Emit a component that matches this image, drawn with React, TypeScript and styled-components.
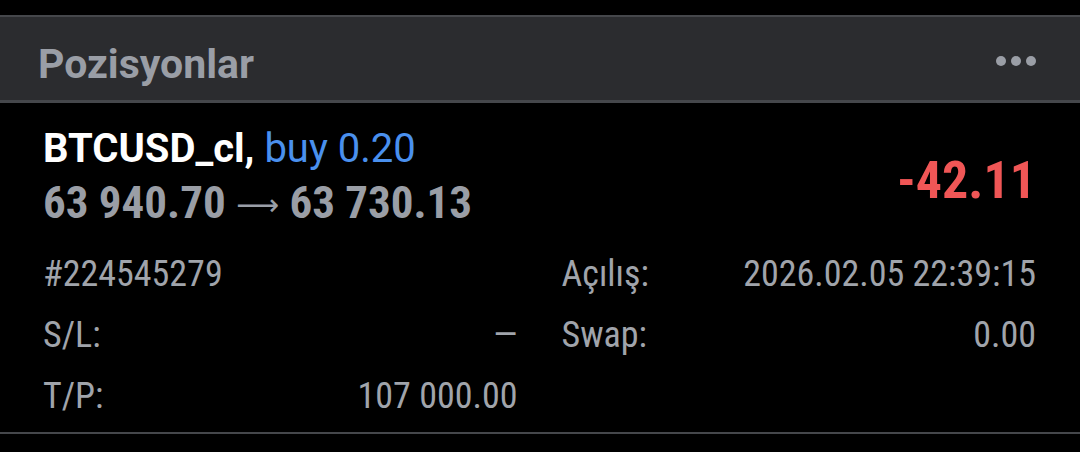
import React from 'react';
import styled, { createGlobalStyle } from 'styled-components';

const Global = createGlobalStyle`
  html, body { margin: 0; background: #000; }
  body { padding-top: 15px; }
`;

const Header = styled.div`
  height: 83px;
  box-sizing: content-box;
  border-top: 2px solid #45474b;
  border-bottom: 3px solid #45474b;
  background: #2b2c2f;
  display: flex;
  align-items: flex-start;
  justify-content: space-between;
  padding: 0 44px 0 38px;
`;

const Title = styled.div`
  font-family: Roboto, 'Liberation Sans', sans-serif;
  font-weight: 700;
  font-size: 41px;
  line-height: 50px;
  color: #9a9ea6;
  margin-top: 22px;
`;

const MoreIcon = styled.svg`
  margin-top: 38px;
`;

const Card = styled.div`
  padding: 22px 44px 5px 43px;
  border-bottom: 2px solid #45474b;
`;

const Top = styled.div`
  display: flex;
  align-items: center;
  justify-content: space-between;
`;

const Symbol = styled.div`
  font-family: Roboto, 'Liberation Sans', sans-serif;
  font-size: 40px;
  line-height: 48px;
  white-space: nowrap;
`;

const SymName = styled.span`
  font-weight: 700;
  color: #ffffff;
`;

const Side = styled.span`
  color: #4a90ee;
`;

const Prices = styled.div`
  font-family: 'Roboto Condensed', Roboto, sans-serif;
  font-weight: 700;
  font-size: 45px;
  line-height: 60px;
  color: #9a9ea6;
  white-space: nowrap;
`;

const Arrow = styled.span`
  font-family: 'DejaVu Sans', sans-serif;
  font-weight: 400;
  font-size: 30px;
  vertical-align: 3px;
`;

const Profit = styled.div<{ $neg: boolean }>`
  font-family: 'Roboto Condensed', Roboto, sans-serif;
  font-weight: 700;
  font-size: 52px;
  line-height: 60px;
  color: ${(p) => (p.$neg ? '#f05656' : '#4a90ee')};
  margin-top: 2px;
`;

const Details = styled.div`
  display: grid;
  grid-template-columns: 1fr 1fr;
  column-gap: 44px;
  margin-top: 9px;
`;

const Row = styled.div`
  display: flex;
  justify-content: space-between;
  font-family: 'Roboto Condensed', Roboto, sans-serif;
  font-size: 36px;
  line-height: 61px;
  color: #a0a4ab;
  white-space: nowrap;
`;

const Label = styled.span``;
const Value = styled.span``;

const rows: [string, string, string, string][] = [
  ['#224545279', '', 'Açılış:', '2026.02.05 22:39:15'],
  ['S/L:', '—', 'Swap:', '0.00'],
  ['T/P:', '107 000.00', '', ''],
];

export default function App() {
  const profit = -42.11;
  return (
    <>
      <Global />
      <Header>
        <Title>Pozisyonlar</Title>
        <MoreIcon width="40" height="12" viewBox="0 0 40 12">
          <circle cx="5" cy="6" r="5" fill="#9a9ea6" />
          <circle cx="20" cy="6" r="5" fill="#9a9ea6" />
          <circle cx="35" cy="6" r="5" fill="#9a9ea6" />
        </MoreIcon>
      </Header>
      <Card>
        <Top>
          <div>
            <Symbol>
              <SymName>BTCUSD_cl,</SymName> <Side>buy 0.20</Side>
            </Symbol>
            <Prices>
              63 940.70 <Arrow>⟶</Arrow> 63 730.13
            </Prices>
          </div>
          <Profit $neg={profit < 0}>{profit.toFixed(2)}</Profit>
        </Top>
        <Details>
          {rows.map(([l1, v1, l2, v2], i) => (
            <React.Fragment key={i}>
              <Row>
                <Label>{l1}</Label>
                <Value>{v1}</Value>
              </Row>
              <Row>
                <Label>{l2}</Label>
                <Value>{v2}</Value>
              </Row>
            </React.Fragment>
          ))}
        </Details>
      </Card>
    </>
  );
}
